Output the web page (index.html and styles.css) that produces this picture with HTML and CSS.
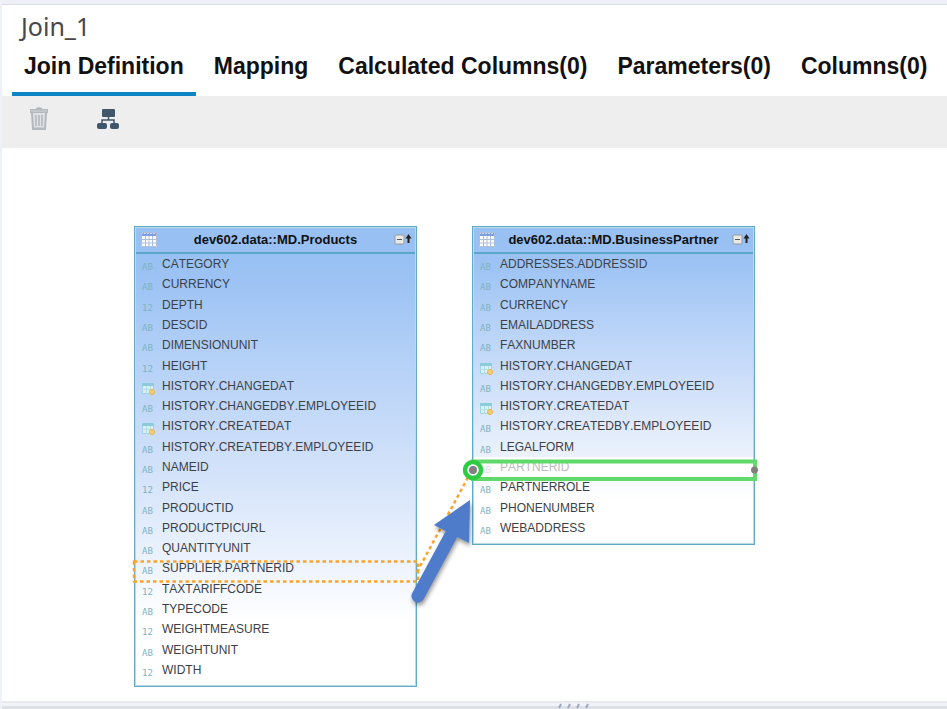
FILE: index.html
```html
<!DOCTYPE html>
<html lang="en">
<head>
<meta charset="utf-8">
<title>Join_1</title>
<link rel="stylesheet" href="styles.css">
</head>
<body>
<svg class="defs" aria-hidden="true">
  <symbol id="table" viewBox="0 0 16 15">
    <path fill="#fff" d="M0 0h16v15H0z"/>
    <path fill="#7fa0e0" d="M0 0h16v4H0z"/>
    <path stroke="#c3d6f5" d="M0 1.500h16" stroke-dasharray="2 1"/>
    <path fill="none" stroke="#aebfdd" d="M.5.5h15v14H.5zM4.500 4v11M8 4v11M11.500 4v11M0 7.500h16M0 11h16"/>
  </symbol>
  <symbol id="collapse" viewBox="0 0 18 11">
    <rect x="1" y="1" width="9" height="9" rx="1" fill="#e9e9e6" stroke="#999"/>
    <path stroke="#555" d="M3 5.500h5"/>
    <path fill="#222" d="M14.500 0 17.500 4.500h-2V9h-2V4.500h-2z"/>
  </symbol>
  <symbol id="date" viewBox="0 0 13 12">
    <path fill="#d9f0f4" stroke="#9fd3df" d="M.5.5h11v10H.5z"/>
    <path fill="#8ccbd9" d="M0 0h12v3H0z"/>
    <path fill="none" stroke="#b3dde5" d="M4.500 3v8M8.500 3v8M0 6.500h12"/>
    <circle cx="10" cy="9" r="2.500" fill="#f6cf73" stroke="#e9b550"/>
  </symbol>
</svg>
<main class="editor">
  <header class="head">
    <h1 class="title">Join_1</h1>
    <nav class="tabs" role="tablist">
      <button class="tab active" role="tab" aria-selected="true">Join Definition</button>
      <button class="tab" role="tab">Mapping</button>
      <button class="tab" role="tab">Calculated Columns(0)</button>
      <button class="tab" role="tab">Parameters(0)</button>
      <button class="tab" role="tab">Columns(0)</button>
    </nav>
  </header>
  <div class="toolbar">
    <button class="tool" aria-label="Delete">
      <svg width="20" height="24" viewBox="0 0 20 24" fill="none" stroke="#b3b8bd">
        <path fill="#b3b8bd" stroke="none" d="M7 1q3-1.500 6 0v1h6v4H1V2h6z"/>
        <path stroke="#d5d8da" d="M2 4h16"/>
        <path fill="#dfe2e4" stroke-width="2" d="m3 6 1 16h12l1-16"/>
        <path stroke-width="2" d="M4 21.500h12"/>
        <path stroke-width="1.500" d="M7 8v11M10 8v11M13 8v11"/>
      </svg>
    </button>
    <button class="tool" aria-label="Auto layout">
      <svg width="22" height="22" viewBox="0 0 22 22" fill="#40566a">
        <rect x="5" y="1" width="13" height="8" rx="1"/>
        <rect x="0" y="15" width="10" height="6" rx="2"/>
        <rect x="13" y="15" width="9" height="6" rx="2"/>
        <path fill="none" stroke="#40566a" stroke-width="1.500" d="M11.500 9v3M5 15v-3h12v3"/>
      </svg>
    </button>
  </div>
  <section class="canvas" aria-label="Join diagram">
    <article class="node products">
      <h2 class="node-head"><svg class="i-table"><use href="#table"/></svg><span class="node-name">dev602.data::MD.Products</span><svg class="i-collapse"><use href="#collapse"/></svg></h2>
      <ul class="cols">
        <li><span class="type">AB</span>CATEGORY</li>
        <li><span class="type">AB</span>CURRENCY</li>
        <li><span class="type">12</span>DEPTH</li>
        <li><span class="type">AB</span>DESCID</li>
        <li><span class="type">AB</span>DIMENSIONUNIT</li>
        <li><span class="type">12</span>HEIGHT</li>
        <li><svg class="type"><use href="#date"/></svg>HISTORY.CHANGEDAT</li>
        <li><span class="type">AB</span>HISTORY.CHANGEDBY.EMPLOYEEID</li>
        <li><svg class="type"><use href="#date"/></svg>HISTORY.CREATEDAT</li>
        <li><span class="type">AB</span>HISTORY.CREATEDBY.EMPLOYEEID</li>
        <li><span class="type">AB</span>NAMEID</li>
        <li><span class="type">12</span>PRICE</li>
        <li><span class="type">AB</span>PRODUCTID</li>
        <li><span class="type">AB</span>PRODUCTPICURL</li>
        <li><span class="type">AB</span>QUANTITYUNIT</li>
        <li><span class="type">AB</span>SUPPLIER.PARTNERID</li>
        <li><span class="type">12</span>TAXTARIFFCODE</li>
        <li><span class="type">AB</span>TYPECODE</li>
        <li><span class="type">12</span>WEIGHTMEASURE</li>
        <li><span class="type">AB</span>WEIGHTUNIT</li>
        <li><span class="type">12</span>WIDTH</li>
      </ul>
    </article>
    <article class="node partner">
      <h2 class="node-head"><svg class="i-table"><use href="#table"/></svg><span class="node-name">dev602.data::MD.BusinessPartner</span><svg class="i-collapse"><use href="#collapse"/></svg></h2>
      <ul class="cols">
        <li><span class="type">AB</span>ADDRESSES.ADDRESSID</li>
        <li><span class="type">AB</span>COMPANYNAME</li>
        <li><span class="type">AB</span>CURRENCY</li>
        <li><span class="type">AB</span>EMAILADDRESS</li>
        <li><span class="type">AB</span>FAXNUMBER</li>
        <li><svg class="type"><use href="#date"/></svg>HISTORY.CHANGEDAT</li>
        <li><span class="type">AB</span>HISTORY.CHANGEDBY.EMPLOYEEID</li>
        <li><svg class="type"><use href="#date"/></svg>HISTORY.CREATEDAT</li>
        <li><span class="type">AB</span>HISTORY.CREATEDBY.EMPLOYEEID</li>
        <li><span class="type">AB</span>LEGALFORM</li>
        <li class="target"><span class="type">AB</span>PARTNERID</li>
        <li><span class="type">AB</span>PARTNERROLE</li>
        <li><span class="type">AB</span>PHONENUMBER</li>
        <li><span class="type">AB</span>WEBADDRESS</li>
      </ul>
    </article>
    <svg class="links" aria-hidden="true">
      <g fill="none" stroke="#fba42a" stroke-width="2.500" stroke-dasharray="3.500 3">
        <rect x="132" y="413.500" width="284" height="20"/>
        <path d="M415 424 470 322"/>
      </g>
      <rect x="471" y="313.500" width="282" height="17.500" fill="none" stroke="#5fd96b" stroke-width="4"/>
      <circle cx="471" cy="322" r="8" fill="#fff" stroke="#2fcb43" stroke-width="4.500"/>
      <circle cx="471" cy="322" r="4" fill="#808080"/>
      <circle cx="752.500" cy="322" r="3.500" fill="#808080"/>
      <g class="pointer" fill="#4f7bcb">
        <path stroke="#4f7bcb" stroke-width="13" stroke-linecap="round" d="m416 448 33-61"/>
        <path d="m468 352-36 25 35 18z"/>
      </g>
    </svg>
  </section>
  <footer class="splitter">
    <svg width="32" height="6" viewBox="0 0 32 6" stroke="#9aaac2" stroke-width="2"><path d="m1 5 2-4M10 5l2-4M19 5l2-4M28 5l2-4"/></svg>
  </footer>
</main>
</body>
</html>
```
FILE: styles.css
```css
* { box-sizing: border-box; }
body {
  margin: 0;
  font-family: "Liberation Sans", Arial, sans-serif;
  background: #fff;
}
.defs { position: absolute; width: 0; height: 0; }
.editor {
  display: flex;
  flex-direction: column;
  min-height: 100vh;
  border-left: 2px solid #eef2f8;
  overflow: hidden;
}
.head {
  border-top: 4px solid #edf1f7;
  box-shadow: inset 0 1px #d9dee6;
}
.title {
  margin: 0;
  padding: 4px 19px 0;
  font: 400 25px/36px "Noto Sans", "Open Sans", sans-serif;
  color: #484848;
}
.tabs { display: flex; gap: 6px; padding-left: 10px; }
.tab {
  flex: none;
  padding: 0 12px 4px;
  height: 52px;
  border: 0;
  border-bottom: 4px solid transparent;
  background: none;
  font: 700 23px/40px "Liberation Sans", Arial, sans-serif;
  color: #111;
}
.active { border-bottom-color: #0d84c6; }
.toolbar {
  display: flex;
  align-items: center;
  gap: 48px;
  height: 52px;
  padding: 0 27px 6px;
  background: #eee;
}
.tool { display: flex; padding: 0; border: 0; background: none; }
.canvas { position: relative; flex: 1; min-height: 553px; }
.node {
  position: absolute;
  top: 78px;
  width: 283px;
  padding-bottom: 6px;
  border: 1px solid #62aac6;
  outline: 1px solid #b9dbe8;
  outline-offset: -2px;
  background: linear-gradient(#98c0f3 4%, #9dc3f4 12%, #b3d0f7 28%, #d4e3fa 54%, #ebf2fd 72%, #fff 86%);
}
.products { left: 132px; }
.partner { left: 470px; }
.node-head {
  display: flex;
  align-items: center;
  height: 27px;
  margin: 0;
  padding: 0 4px 0 6px;
  border-bottom: 2px solid #5ba7c9;
  font-size: 13px;
  font-kerning: none;
  color: #111;
}
.node-name { flex: 1; text-align: center; white-space: nowrap; }
.i-table { width: 16px; height: 15px; }
.i-collapse { width: 18px; height: 11px; }
.cols {
  display: grid;
  grid-auto-rows: 1fr;
  margin: 0;
  padding: 0;
  list-style: none;
  font-size: 12px;
  font-kerning: none;
  color: #3b4148;
}
.products .cols { height: 426px; }
.partner .cols { height: 284px; }
.cols li { display: flex; align-items: center; padding-left: 7px; }
.type {
  flex: none;
  width: 13px;
  height: 12px;
  margin: 6px 7px 0 0;
  font: 9px/12px "DejaVu Sans Mono", monospace;
  color: #7eb3c2;
}
.cols .target { background: #fff; color: #bdbdbd; }
.target .type { color: #d3e3e8; }
.links {
  position: absolute;
  top: 0;
  left: 0;
  width: 100%;
  height: 100%;
  pointer-events: none;
}
.pointer { filter: drop-shadow(1px 3px 2px rgba(0, 0, 0, .4)); }
.splitter {
  display: flex;
  justify-content: center;
  height: 8px;
  padding-left: 198px;
  border-top: 2px solid #e7ebef;
  border-bottom: 3px solid #dcdfe3;
  background: #f0f3f7;
}
```
